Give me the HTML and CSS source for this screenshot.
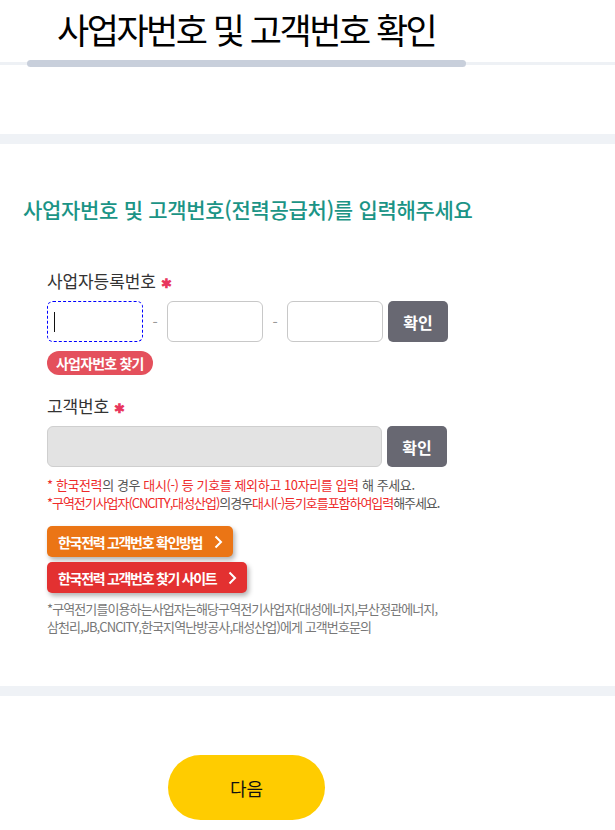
FILE: index.html
```html
<!DOCTYPE html>
<html lang="ko">
<head>
<meta charset="utf-8">
<title>사업자번호 및 고객번호 확인</title>
<link rel="stylesheet" href="styles.css">
</head>
<body>
<header class="header">
  <h1 class="title">사업자번호 및 고객번호 확인</h1>
  <div class="track"><div class="indicator"></div></div>
</header>
<div class="band band-top"></div>
<main class="section">
  <h2 class="subtitle">사업자번호 및 고객번호(전력공급처)를 입력해주세요</h2>
  <div class="form">
    <div class="label">사업자등록번호 <span class="req">✱</span></div>
    <div class="row">
      <div class="field field-a focused"><span class="caret"></span></div>
      <span class="dash">-</span>
      <input class="field field-a" type="text">
      <span class="dash">-</span>
      <input class="field field-a" type="text">
      <button class="confirm">확인</button>
    </div>
    <span class="pill">사업자번호 찾기</span>

    <div class="label label-2">고객번호 <span class="req">✱</span></div>
    <div class="row">
      <input class="field field-b" type="text" disabled>
      <button class="confirm">확인</button>
    </div>
    <p class="note">
      <span class="red">* 한국전력</span>의 경우 <span class="red">대시(-) 등 기호를 제외하고 10자리를 입력</span> 해 주세요.<br>
      <span class="tight"><span class="red">*구역전기사업자(CNCITY,대성산업)</span>의경우<span class="red">대시(-)등기호를포함하여입력</span>해주세요.</span>
    </p>
    <div class="links">
      <a class="link link-orange"><span>한국전력 고객번호 확인방법</span><span class="chev"><svg width="9" height="14" viewBox="0 0 9 14"><path d="M1.5 1.5 L7 7 L1.5 12.5" fill="none" stroke="#fff" stroke-width="2"/></svg></span></a>
      <a class="link link-red"><span>한국전력 고객번호 찾기 사이트</span><span class="chev"><svg width="9" height="14" viewBox="0 0 9 14"><path d="M1.5 1.5 L7 7 L1.5 12.5" fill="none" stroke="#fff" stroke-width="2"/></svg></span></a>
    </div>
    <p class="info">*구역전기를이용하는사업자는해당구역전기사업자(대성에너지,부산정관에너지,<br>삼천리,JB,CNCITY,한국지역난방공사,대성산업)에게 고객번호문의</p>
  </div>
</main>
<div class="band band-bottom"></div>
<div class="footer">
  <button class="next">다음</button>
</div>
</body>
</html>
```
FILE: styles.css
```css
* { box-sizing: border-box; }
body {
  margin: 0;
  background: #fff;
  font-family: "Noto Sans CJK KR", "Noto Sans", sans-serif;
  color: #222;
}
.header { height: 67px; }
.title {
  margin: 0;
  padding-left: 57px;
  height: 60px;
  font-size: 35px;
  line-height: 57px;
  font-weight: 400;
  color: #000;
  letter-spacing: -2.5px;
  white-space: nowrap;
}
.track {
  height: 7px;
  background: linear-gradient(#eef1f5, #eef1f5) center / 100% 3px no-repeat;
  display: flex;
}
.indicator {
  margin-left: 27px;
  width: 439px;
  height: 7px;
  border-radius: 4px;
  background: #c8cfdb;
}
.band { height: 10px; background: #eff2f6; }
.band-top { margin-top: 67px; }
.section { padding: 51px 0 50px 23px; }
.subtitle {
  margin: 0;
  font-size: 21px;
  line-height: 28px;
  font-weight: 500;
  color: #1b9486;
  letter-spacing: -0.3px;
  white-space: nowrap;
}
.form { padding-left: 24px; }
.label {
  margin-top: 46px;
  height: 24px;
  font-size: 17px;
  line-height: 24px;
  color: #333;
  letter-spacing: -0.1px;
  display: flex;
  align-items: center;
  gap: 5px;
  overflow: visible;
}
.label-2 { margin-top: 19px; }
.req { color: #e8365d; font-size: 13px; line-height: 1; font-weight: 700; padding-top: 3px; }
.row {
  margin-top: 8px;
  display: flex;
  align-items: center;
  height: 41px;
}
.field {
  height: 41px;
  border: 1px solid #c8c8c8;
  border-radius: 6px;
  background: #fff;
  font: inherit;
  padding: 0 6px;
}
.field-a { width: 96px; }
.focused {
  border: 1px dashed #0000ff;
  display: flex;
  align-items: center;
}
.caret { width: 1px; height: 20px; background: #111; }
.field-b { width: 335px; background: #e3e3e3; border-color: #cfcfcf; }
.dash { width: 24px; text-align: center; color: #999; font-size: 15px; }
.confirm {
  margin-left: 5px;
  width: 60px;
  height: 41px;
  border: 0;
  border-radius: 5px;
  background: #686872;
  color: #fff;
  font: inherit;
  font-size: 16px;
  font-weight: 700;
}
.pill {
  display: inline-block;
  margin-top: 9px;
  height: 24px;
  padding: 0 9px;
  border-radius: 12px;
  background: #e4505c;
  color: #fff;
  font-size: 14px;
  font-weight: 700;
  line-height: 24px;
  letter-spacing: -0.8px;
}
.note {
  margin: 9px 0 0;
  font-size: 13px;
  line-height: 18px;
  color: #555;
  letter-spacing: -0.4px;
  white-space: nowrap;
}
.tight { letter-spacing: -1.05px; }
.red { color: #ee2a2a; }
.links {
  margin-top: 14px;
  display: flex;
  flex-direction: column;
  align-items: flex-start;
  gap: 5px;
}
.link {
  display: inline-flex;
  align-items: center;
  height: 31px;
  padding: 0 10px 0 11px;
  border-radius: 5px;
  color: #fff;
  font-size: 14px;
  font-weight: 700;
  letter-spacing: -1.3px;
  white-space: nowrap;
  box-shadow: 2px 3px 5px rgba(0,0,0,0.3);
}
.link-orange { background: #eb7515; }
.link-red { background: #e33131; }
.chev { margin-left: 12px; display: flex; }
.info {
  margin: 7px 0 0;
  font-size: 13px;
  line-height: 18px;
  color: #777;
  letter-spacing: -0.9px;
  white-space: nowrap;
}
.footer { padding: 59px 0 0 168px; }
.next {
  width: 157px;
  height: 65px;
  border: 0;
  border-radius: 33px;
  background: #ffcc00;
  color: #111;
  font: inherit;
  font-size: 18px;
}
```
